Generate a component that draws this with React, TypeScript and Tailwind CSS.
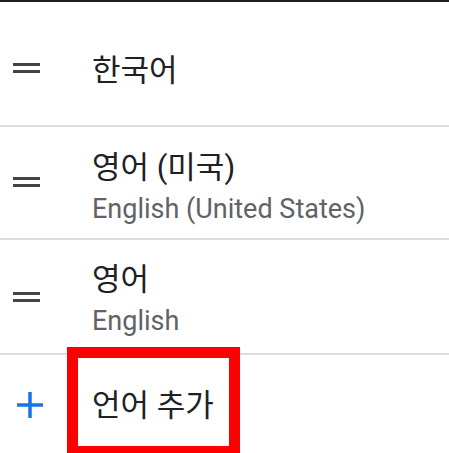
type Lang = { name: string; sub?: string; rowH: string; iconTop: string; textTop: string };

const langs: Lang[] = [
  { name: '한국어', rowH: 'h-[123px]', iconTop: 'mt-[61px]', textTop: 'pt-[51px]' },
  { name: '영어 (미국)', sub: 'English (United States)', rowH: 'h-[111px]', iconTop: 'mt-[50px]', textTop: 'pt-[23px]' },
  { name: '영어', sub: 'English', rowH: 'h-[113px]', iconTop: 'mt-[52px]', textTop: 'pt-[22px]' },
];

function DragHandle() {
  return (
    <svg width="27" height="10" viewBox="0 0 27 10" className="block">
      <rect x="0" y="0" width="27" height="3" fill="#444" />
      <rect x="0" y="7" width="27" height="3" fill="#444" />
    </svg>
  );
}

function AddIcon() {
  return (
    <svg width="26" height="26" viewBox="0 0 26 26" className="block">
      <rect x="0" y="11.25" width="26" height="3.5" fill="#1a73e8" />
      <rect x="11.25" y="0" width="3.5" height="26" fill="#1a73e8" />
    </svg>
  );
}

export default function App() {
  return (
    <div className="w-[449px] h-[453px] bg-white overflow-hidden relative font-['Roboto','Noto_Sans_CJK_KR',sans-serif]">
      <div className="h-[2px] bg-[#1f1f1f]" />

      {langs.map(l => (
        <div key={l.name}>
          <div className={`flex items-start ${l.rowH}`}>
            <div className={`w-[92px] pl-[13px] flex-none ${l.iconTop}`}>
              <DragHandle />
            </div>
            <div className={`flex flex-col ${l.textTop}`}>
              <span className="text-[31px] leading-[36px] text-[#202124]">{l.name}</span>
              {l.sub && <span className="mt-[7px] text-[27px] leading-[32px] text-[#5f6368]">{l.sub}</span>}
            </div>
          </div>
          <div className="h-[2px] bg-[#dcdcdc]" />
        </div>
      ))}

      <div className="flex items-start h-[100px]">
        <div className="w-[92px] pl-[17px] pt-[37px] flex-none">
          <AddIcon />
        </div>
        <span className="pt-[33px] text-[31px] leading-[36px] text-[#202124]">언어 추가</span>
      </div>

      {/* annotation box */}
      <div className="absolute left-[67px] top-[347px] w-[173px] h-[110px] border-[11px] border-[#ff0000]" />
    </div>
  );
}
